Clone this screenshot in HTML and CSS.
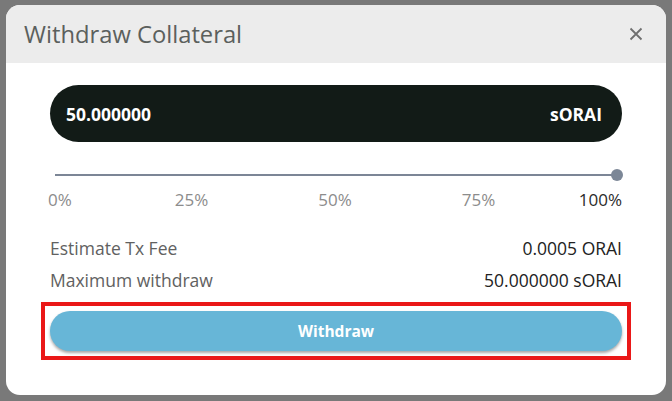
FILE: index.html
```html
<!DOCTYPE html>
<html>
<head>
<meta charset="utf-8">
<link rel="stylesheet" href="styles.css">
</head>
<body>
<div class="modal">
  <div class="modal-header">
    <div class="modal-title">Withdraw Collateral</div>
    <button class="close-btn" aria-label="Close">
      <svg width="14" height="14" viewBox="0 0 14 14"><path d="M1.5 1.5 L12.5 12.5 M12.5 1.5 L1.5 12.5" stroke="#6f6f6f" stroke-width="1.8" fill="none"/></svg>
    </button>
  </div>
  <div class="modal-body">
    <div class="amount-input">
      <span class="amount-value">50.000000</span>
      <span class="amount-token">sORAI</span>
    </div>
    <div class="slider">
      <div class="slider-track"></div>
      <div class="slider-thumb"></div>
    </div>
    <div class="slider-labels">
      <span class="lbl lbl-start">0%</span>
      <span class="lbl">25%</span>
      <span class="lbl">50%</span>
      <span class="lbl">75%</span>
      <span class="lbl lbl-end active">100%</span>
    </div>
    <div class="info">
      <div class="info-row"><span class="info-label">Estimate Tx Fee</span><span class="info-value">0.0005 ORAI</span></div>
      <div class="info-row"><span class="info-label">Maximum withdraw</span><span class="info-value">50.000000 sORAI</span></div>
    </div>
    <div class="highlight">
      <button class="withdraw-btn">Withdraw</button>
    </div>
  </div>
</div>
</body>
</html>
```
FILE: styles.css
```css
* { box-sizing: border-box; }
html, body { margin: 0; padding: 0; }
body {
  background: #797979;
  font-family: "Open Sans", "Liberation Sans", sans-serif;
  width: 672px;
  height: 401px;
  overflow: hidden;
  padding: 5px 6px;
}
.modal {
  width: 660px;
  height: 390px;
  background: #ffffff;
  border-radius: 14px;
  overflow: hidden;
}
.modal-header {
  height: 58px;
  background: #ececec;
  display: flex;
  align-items: center;
  justify-content: space-between;
  padding: 0 23px 0 18px;
}
.modal-title {
  font-size: 23.75px;
  color: #5b605d;
}
.close-btn {
  border: 0;
  background: transparent;
  padding: 0;
  width: 14px;
  height: 14px;
  display: flex;
}
.modal-body {
  padding: 22px 44px 0 44px;
}
.amount-input {
  height: 57px;
  border-radius: 29px;
  background: #121b17;
  display: flex;
  align-items: center;
  justify-content: space-between;
  padding: 0 20px 0 16px;
  color: #ffffff;
  font-weight: 700;
  font-size: 17.5px;
}
.slider {
  position: relative;
  height: 12px;
  margin: 27px 5px 0 5px;
  display: flex;
  align-items: center;
}
.slider-track {
  flex: 1;
  height: 2px;
  background: #7c8696;
}
.slider-thumb {
  position: absolute;
  right: -6px;
  top: 0;
  width: 12px;
  height: 12px;
  border-radius: 50%;
  background: #7c8797;
}
.slider-labels {
  display: grid;
  grid-template-columns: 1fr 2fr 2fr 2fr 1fr;
  margin: 8px 0 0 -2px;
  font-size: 17px;
  line-height: 22px;
  color: #8c8c8c;
}
.lbl { text-align: center; white-space: nowrap; }
.lbl-start { text-align: left; }
.lbl-end { text-align: right; }
.lbl.active { color: #2b2b2b; }
.info {
  margin-top: 26px;
  display: flex;
  flex-direction: column;
  gap: 10px;
}
.info-row {
  display: flex;
  justify-content: space-between;
  font-size: 17.5px;
  line-height: 22px;
}
.info-label { color: #616161; }
.info-value { color: #222222; }
.highlight {
  margin: 11px -9px 0 -9px;
  border: 4px solid #ea1818;
  padding: 5px;
}
.withdraw-btn {
  display: block;
  width: 100%;
  height: 40px;
  border: 0;
  border-radius: 20px;
  background: #67b6d7;
  color: #ffffff;
  font-family: "Open Sans", "Liberation Sans", sans-serif;
  font-weight: 700;
  font-size: 15.5px;
  box-shadow: 0 2px 3px rgba(0, 0, 0, 0.35);
}
```
